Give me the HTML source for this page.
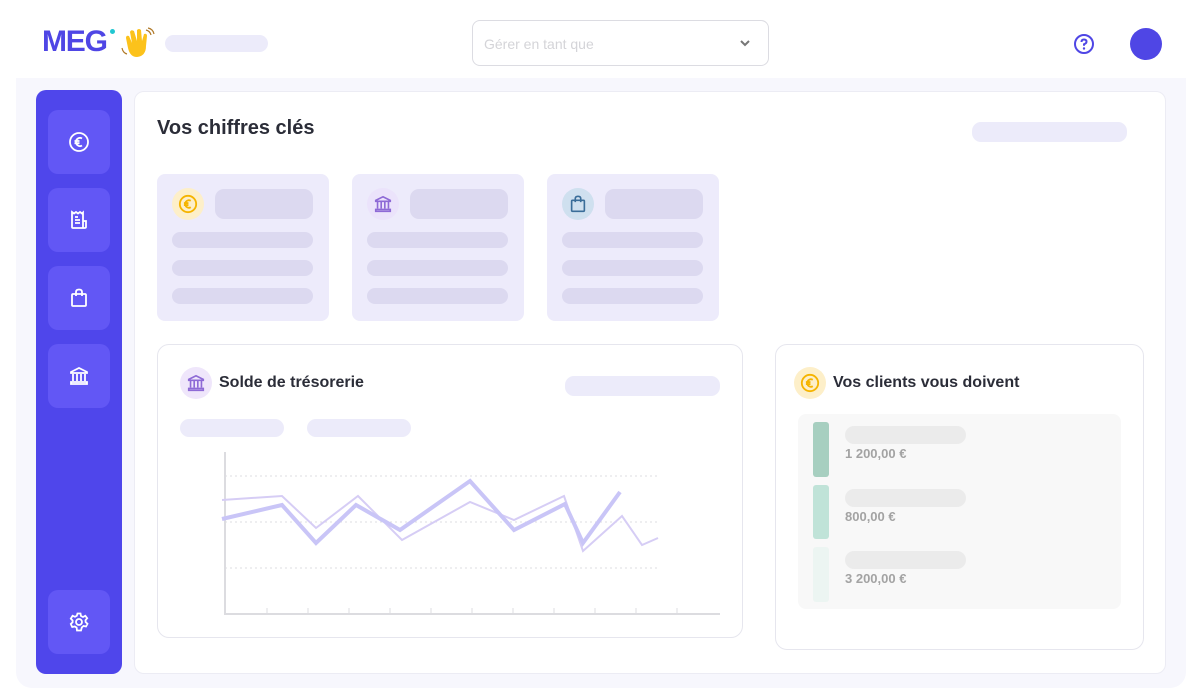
<!DOCTYPE html>
<html><head><meta charset="utf-8"><style>
*{margin:0;padding:0;box-sizing:border-box}
body{width:1198px;height:695px;background:#fff;font-family:"Liberation Sans",sans-serif;position:relative;overflow:hidden}
.a{position:absolute}
.sb{background:#6257f5;border-radius:10px;width:62px;height:64px;left:48px;display:flex;align-items:center;justify-content:center}
.p{position:absolute;border-radius:9px;background:#dcd9f0}
.card{position:absolute;top:174px;width:172px;height:147px;background:#edebfb;border-radius:8px}
.ic{position:absolute;width:32px;height:32px;border-radius:50%;display:flex;align-items:center;justify-content:center}
.t{font-weight:bold;color:#2b2d38}
.amt{position:absolute;left:845px;font-size:13px;font-weight:bold;color:#a3a3a3}
</style></head><body>
<div class="a t" style="left:42px;top:25px;font-size:30px;color:#4f46e5;letter-spacing:-1.2px;font-weight:900">MEG</div>
<div class="a" style="left:110px;top:29px;width:5px;height:5px;border-radius:50%;background:#22c7d1"></div>
<svg class="a" style="left:120px;top:26px" width="36" height="34" viewBox="0 0 36 34"><path d="M8 22 L6 12 Q6 9 9 10 L12 17 L10 6 Q11 3 14 5 L17 15 L17 4 Q19 2 21 4 L22 15 L24 8 Q27 7 27 10 L26 20 Q26 30 17 31 Q10 31 8 22Z" fill="#fcc21b"/><path d="M26 4 Q30 5 31 9 M28 2 Q33 3 34 8 M2 22 Q3 27 7 28" stroke="#b07a2a" stroke-width="1.2" fill="none"/></svg>
<div class="a" style="left:165px;top:35px;width:103px;height:17px;border-radius:9px;background:#ecebfa"></div>
<div class="a" style="left:472px;top:20px;width:297px;height:46px;border:1px solid #dcdce2;border-radius:8px"></div>
<div class="a" style="left:484px;top:36px;font-size:14px;color:#d4d4d8">Gérer en tant que</div>
<svg class="a" style="left:739px;top:38px" width="12" height="10" viewBox="0 0 12 10"><path d="M2 3 L6 7 L10 3" stroke="#777" stroke-width="2" fill="none"/></svg>
<svg class="a" style="left:1073px;top:33px" width="22" height="22" viewBox="0 0 22 22"><circle cx="11" cy="11" r="9" stroke="#4f46e5" stroke-width="2" fill="none"/><path d="M8.5 9 Q8.5 6.5 11 6.5 Q13.5 6.5 13.5 8.8 Q13.5 10.3 11 11.3 L11 12.8" stroke="#4f46e5" stroke-width="2" fill="none"/><circle cx="11" cy="15.5" r="1.2" fill="#4f46e5"/></svg>
<div class="a" style="left:1130px;top:28px;width:32px;height:32px;border-radius:50%;background:#4f46e5"></div>

<div class="a" style="left:16px;top:78px;width:1170px;height:610px;background:#f7f7fd;border-radius:0 0 16px 16px"></div>
<div class="a" style="left:36px;top:90px;width:86px;height:584px;background:#4f46eb;border-radius:10px"></div>
<div class="a sb" style="top:110px"><svg width="22" height="22" viewBox="0 0 22 22" fill="none" stroke="#fff" stroke-width="1.8"><circle cx="11" cy="11" r="9"/><path d="M14 7.5 Q12.5 6.5 11 7 Q8 8 8 11 Q8 14 11 15 Q12.5 15.5 14 14.5 M6.5 10 H11.5 M6.5 12.2 H11.5"/></svg></div>
<div class="a sb" style="top:188px"><svg width="22" height="22" viewBox="0 0 22 22" fill="none" stroke="#fff" stroke-width="1.8"><path d="M4 3 L6 4.5 L8 3 L10 4.5 L12 3 L14 4.5 L15 3.5 V19 H5 Q4 19 4 18Z M15 12 H18 V18 Q18 19 16.5 19 H15 M7 8 H10 M7 11 H12 M7 14 H12"/></svg></div>
<div class="a sb" style="top:266px"><svg width="22" height="22" viewBox="0 0 22 22" fill="none" stroke="#fff" stroke-width="1.8"><rect x="4" y="7" width="14" height="12" rx="1"/><path d="M8 9 V5 Q8 2.5 11 2.5 Q14 2.5 14 5 V9"/></svg></div>
<div class="a sb" style="top:344px"><svg width="22" height="22" viewBox="0 0 22 22" fill="none" stroke="#fff" stroke-width="1.8"><path d="M3 7 L11 3 L19 7 V8 H3Z M5 9 V16 M9 9 V16 M13 9 V16 M17 9 V16 M3 17 H19 V19 H3Z"/></svg></div>
<div class="a sb" style="top:590px"><svg width="22" height="22" viewBox="0 0 22 22" fill="none" stroke="#fff" stroke-width="1.8"><circle cx="11" cy="11" r="3"/><path d="M9.5 2.5 H12.5 L13 5 L15 6 L17.3 4.8 L19.2 7.2 L17.5 9.2 L17.6 11 L19.5 12.8 L18 15.5 L15.5 15 L13.8 16.5 L13 19.5 H9 L8.6 16.6 L6.8 15.5 L4.2 16 L2.8 13 L4.6 11.2 V9.5 L2.8 7.6 L4.6 4.8 L7 5.8 L8.8 4.8Z"/></svg></div>

<div class="a" style="left:134px;top:91px;width:1032px;height:583px;background:#fff;border:1px solid #ececf4;border-radius:10px"></div>
<div class="a t" style="left:157px;top:117px;font-size:20px">Vos chiffres clés</div>
<div class="a" style="left:972px;top:122px;width:155px;height:20px;border-radius:9px;background:#ecebfa"></div>

<div class="card" style="left:157px"></div><div class="card" style="left:352px"></div><div class="card" style="left:547px"></div>
<div class="ic" style="left:172px;top:188px;background:#fdefc9"><svg width="20" height="20" viewBox="0 0 22 22" fill="none" stroke="#f5b400" stroke-width="2"><circle cx="11" cy="11" r="9"/><path d="M14 7.5 Q12.5 6.5 11 7 Q8 8 8 11 Q8 14 11 15 Q12.5 15.5 14 14.5 M6.5 10 H11.5 M6.5 12.2 H11.5"/></svg></div>
<div class="ic" style="left:367px;top:188px;background:#ebe3fb"><svg width="20" height="20" viewBox="0 0 22 22" fill="none" stroke="#8e6ad6" stroke-width="1.8"><path d="M3 7 L11 3 L19 7 V8 H3Z M5 9 V16 M9 9 V16 M13 9 V16 M17 9 V16 M3 17 H19 V19 H3Z"/></svg></div>
<div class="ic" style="left:562px;top:188px;background:#cfe0ef"><svg width="20" height="20" viewBox="0 0 22 22" fill="none" stroke="#3a6d99" stroke-width="1.8"><rect x="4" y="7" width="14" height="12" rx="1"/><path d="M8 9 V5 Q8 2.5 11 2.5 Q14 2.5 14 5 V9"/></svg></div>
<div class="p" style="left:215px;top:189px;width:98px;height:30px"></div>
<div class="p" style="left:410px;top:189px;width:98px;height:30px"></div>
<div class="p" style="left:605px;top:189px;width:98px;height:30px"></div>
<div class="p" style="left:172px;top:232px;width:141px;height:16px"></div><div class="p" style="left:172px;top:260px;width:141px;height:16px"></div><div class="p" style="left:172px;top:288px;width:141px;height:16px"></div>
<div class="p" style="left:367px;top:232px;width:141px;height:16px"></div><div class="p" style="left:367px;top:260px;width:141px;height:16px"></div><div class="p" style="left:367px;top:288px;width:141px;height:16px"></div>
<div class="p" style="left:562px;top:232px;width:141px;height:16px"></div><div class="p" style="left:562px;top:260px;width:141px;height:16px"></div><div class="p" style="left:562px;top:288px;width:141px;height:16px"></div>

<div class="a" style="left:157px;top:344px;width:586px;height:294px;border:1px solid #e6e6ee;border-radius:12px"></div>
<div class="ic" style="left:180px;top:367px;background:#efe6fb"><svg width="20" height="20" viewBox="0 0 22 22" fill="none" stroke="#8e6ad6" stroke-width="1.8"><path d="M3 7 L11 3 L19 7 V8 H3Z M5 9 V16 M9 9 V16 M13 9 V16 M17 9 V16 M3 17 H19 V19 H3Z"/></svg></div>
<div class="a t" style="left:219px;top:374px;font-size:16px">Solde de trésorerie</div>
<div class="a" style="left:565px;top:376px;width:155px;height:20px;border-radius:9px;background:#ecebfa"></div>
<div class="a" style="left:180px;top:419px;width:104px;height:18px;border-radius:9px;background:#ecebfa"></div>
<div class="a" style="left:307px;top:419px;width:104px;height:18px;border-radius:9px;background:#ecebfa"></div>
<svg class="a" style="left:0;top:0" width="1198" height="695">
<g stroke="#dcdce0" stroke-width="1" stroke-dasharray="2 3"><path d="M225 476 H657 M225 522 H657 M225 568 H657"/></g>
<path d="M225 452 V614 H720" stroke="#dcdce0" stroke-width="2" fill="none"/>
<g stroke="#dcdce0" stroke-width="1"><path d="M267 608V614M308 608V614M349 608V614M390 608V614M431 608V614M472 608V614M513 608V614M554 608V614M595 608V614M636 608V614M677 608V614"/></g>
<polyline points="222,500 282,496 316,528 358,496 402,540 470,502 514,520 564,496 583,551 622,516 642,545 658,538" fill="none" stroke="#d6cdf5" stroke-width="2"/>
<polyline points="222,519 282,505 316,543 356,505 400,530 470,481 514,530 565,504 583,543 620,492" fill="none" stroke="#c9c5f7" stroke-width="4"/>
</svg>

<div class="a" style="left:775px;top:344px;width:369px;height:306px;border:1px solid #e6e6ee;border-radius:12px"></div>
<div class="ic" style="left:794px;top:367px;background:#fdefc9"><svg width="20" height="20" viewBox="0 0 22 22" fill="none" stroke="#f5b400" stroke-width="2"><circle cx="11" cy="11" r="9"/><path d="M14 7.5 Q12.5 6.5 11 7 Q8 8 8 11 Q8 14 11 15 Q12.5 15.5 14 14.5 M6.5 10 H11.5 M6.5 12.2 H11.5"/></svg></div>
<div class="a t" style="left:833px;top:374px;font-size:16px">Vos clients vous doivent</div>
<div class="a" style="left:798px;top:414px;width:323px;height:195px;background:#f8f8f8;border-radius:8px"></div>
<div class="a" style="left:813px;top:422px;width:16px;height:55px;background:#a7cfc0;border-radius:3px"></div>
<div class="a" style="left:813px;top:485px;width:16px;height:54px;background:#c0e3d8;border-radius:3px"></div>
<div class="a" style="left:813px;top:547px;width:16px;height:55px;background:#ecf5f2;border-radius:3px"></div>
<div class="a" style="left:845px;top:426px;width:121px;height:18px;border-radius:9px;background:#ebebeb"></div>
<div class="a" style="left:845px;top:489px;width:121px;height:18px;border-radius:9px;background:#ebebeb"></div>
<div class="a" style="left:845px;top:551px;width:121px;height:18px;border-radius:9px;background:#ebebeb"></div>
<div class="amt" style="top:446px">1 200,00 €</div>
<div class="amt" style="top:509px">800,00 €</div>
<div class="amt" style="top:571px">3 200,00 €</div>
</body></html>
